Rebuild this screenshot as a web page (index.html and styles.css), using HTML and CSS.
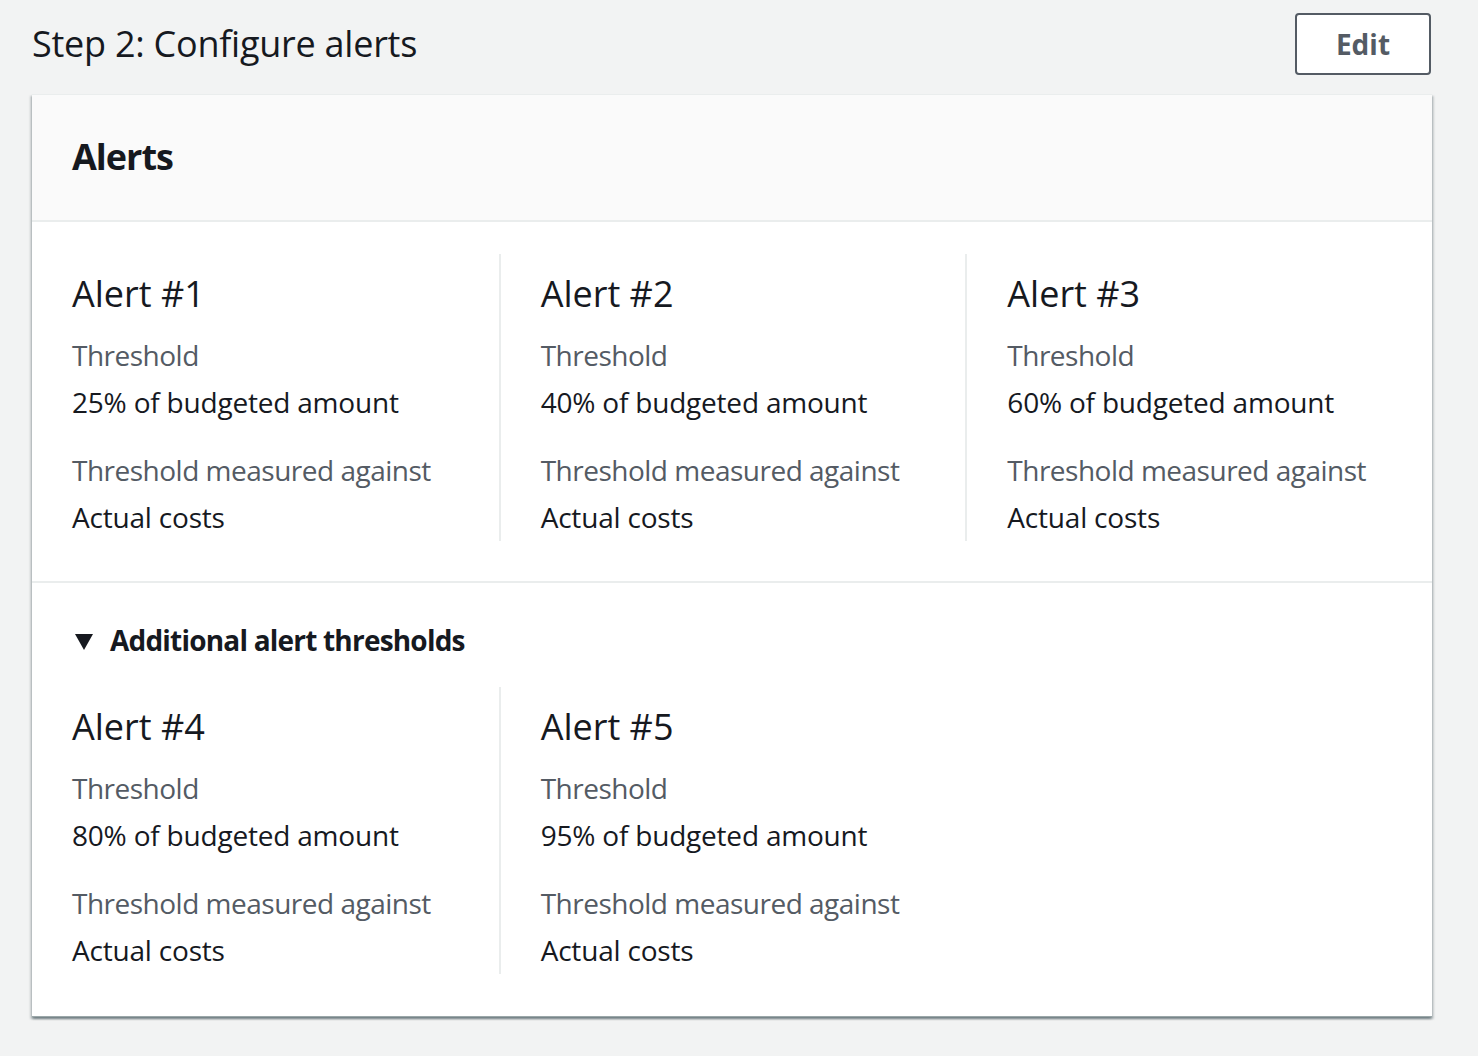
FILE: index.html
```html
<!DOCTYPE html>
<html lang="en">
<head>
<meta charset="utf-8">
<title>Step 2: Configure alerts</title>
<link rel="stylesheet" href="styles.css">
</head>
<body>
<div class="page">
  <div class="page-header">
    <h2 class="page-title">Step 2: Configure alerts</h2>
    <button class="btn">Edit</button>
  </div>
  <div class="card">
    <div class="card-header"><h2 class="card-title">Alerts</h2></div>
    <div class="section first">
      <div class="cols">
        <div class="col">
          <h3 class="alert-title">Alert #1</h3>
          <div class="label">Threshold</div>
          <div class="value">25% of budgeted amount</div>
          <div class="label second">Threshold measured against</div>
          <div class="value">Actual costs</div>
        </div>
        <div class="col divided">
          <h3 class="alert-title">Alert #2</h3>
          <div class="label">Threshold</div>
          <div class="value">40% of budgeted amount</div>
          <div class="label second">Threshold measured against</div>
          <div class="value">Actual costs</div>
        </div>
        <div class="col divided">
          <h3 class="alert-title">Alert #3</h3>
          <div class="label">Threshold</div>
          <div class="value">60% of budgeted amount</div>
          <div class="label second">Threshold measured against</div>
          <div class="value">Actual costs</div>
        </div>
      </div>
    </div>
    <div class="section expander-section">
      <div class="expander">
        <svg class="caret" width="24" height="24" viewBox="0 0 24 24"><polygon points="3,6 21,6 12,22" fill="#16191f"/></svg>
        <span>Additional alert thresholds</span>
      </div>
      <div class="cols">
        <div class="col">
          <h3 class="alert-title">Alert #4</h3>
          <div class="label">Threshold</div>
          <div class="value">80% of budgeted amount</div>
          <div class="label second">Threshold measured against</div>
          <div class="value">Actual costs</div>
        </div>
        <div class="col divided">
          <h3 class="alert-title">Alert #5</h3>
          <div class="label">Threshold</div>
          <div class="value">95% of budgeted amount</div>
          <div class="label second">Threshold measured against</div>
          <div class="value">Actual costs</div>
        </div>
        <div class="col empty"></div>
      </div>
    </div>
  </div>
</div>
</body>
</html>
```
FILE: styles.css
```css
* { box-sizing: border-box; }
html, body { margin: 0; padding: 0; }
body {
  background: #f2f3f3;
  font-family: "Open Sans", "Noto Sans", sans-serif;
  color: #16191f;
  min-height: 1056px;
}
.page {
  width: 1400px;
  margin-left: 32px;
  padding-top: 13px;
}
.page-header {
  display: flex;
  align-items: center;
  justify-content: space-between;
  height: 62px;
  margin-bottom: 19px;
}
.page-title {
  margin: 0;
  font-size: 36px;
  line-height: 44px;
  font-weight: 400;
  letter-spacing: -0.25px;
  color: #16191f;
}
.btn {
  width: 136px;
  height: 62px;
  margin-right: 1px;
  border: 2px solid #545b64;
  border-radius: 4px;
  background: #fff;
  color: #545b64;
  font-family: inherit;
  font-weight: 700;
  font-size: 28px;
  line-height: 44px;
  padding: 0;
}
.card {
  background: #fff;
  border-top: 1px solid #eaeded;
  border-bottom: 1px solid #9ba7a9;
  box-shadow: 0 2px 2px 0 rgba(0,28,36,.35), 2px 2px 2px 0 rgba(0,28,36,.15), -2px 2px 2px 0 rgba(0,28,36,.15);
}
.card-header {
  background: #fafafa;
  border-bottom: 2px solid #eaeded;
  padding: 40px 40px 41px;
}
.card-title {
  margin: 0;
  font-size: 36px;
  line-height: 44px;
  font-weight: 700;
  letter-spacing: -1px;
}
.section.first {
  padding: 32px 0 40px;
  border-bottom: 2px solid #eaeded;
}
.expander-section {
  padding: 35px 0 42px;
}
.expander {
  display: flex;
  align-items: center;
  gap: 14px;
  padding-left: 40px;
  font-size: 28px;
  line-height: 44px;
  font-weight: 700;
  letter-spacing: -0.8px;
  margin-bottom: 25px;
}
.caret { display: block; }
.cols {
  display: grid;
  grid-template-columns: repeat(3, 1fr);
}
.col {
  padding: 18px 20px 2px 40px;
}
.col.divided {
  border-left: 2px solid #eaeded;
}
.alert-title {
  margin: 0 0 17px;
  font-size: 36px;
  line-height: 44px;
  font-weight: 400;
}
.label {
  font-size: 28px;
  line-height: 44px;
  color: #545b64;
  letter-spacing: -0.5px;
  margin-bottom: 3px;
}
.label.second {
  margin-top: 24px;
}
.value {
  font-size: 28px;
  line-height: 44px;
  letter-spacing: -0.2px;
  color: #16191f;
}
```
